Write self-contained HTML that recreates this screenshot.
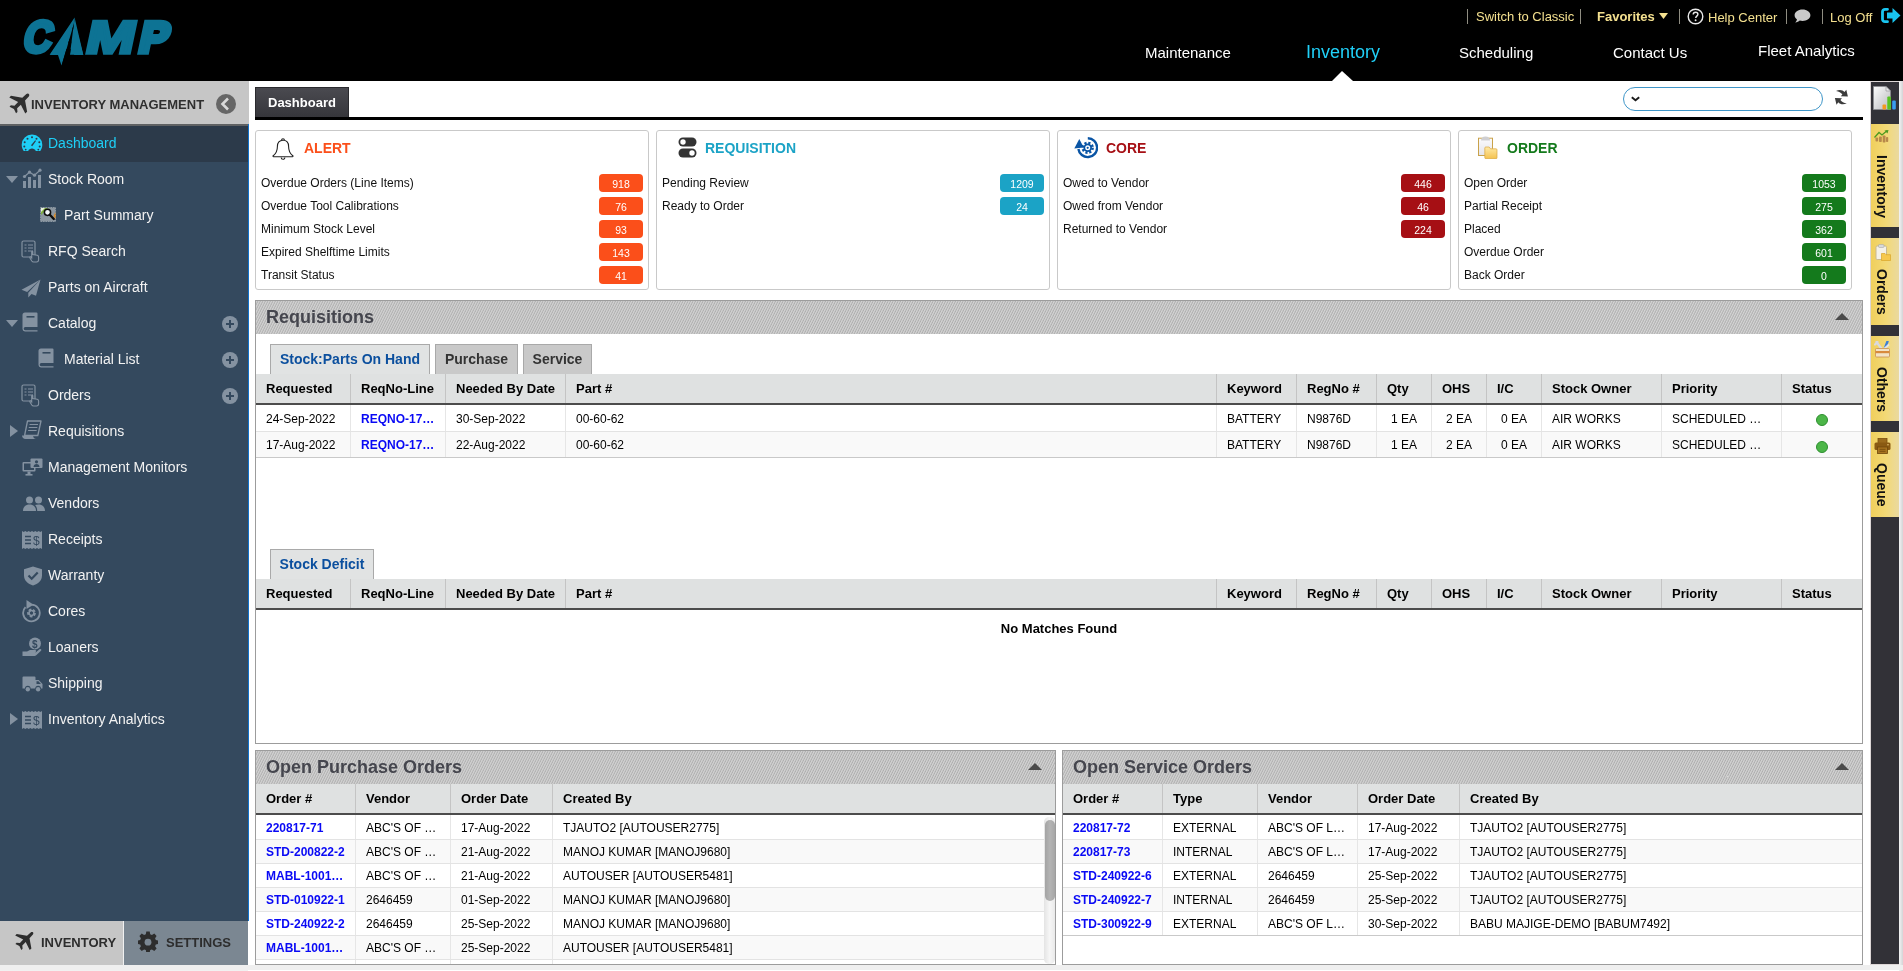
<!DOCTYPE html>
<html lang="en">
<head>
<meta charset="utf-8">
<title>CAMP - Inventory Management Dashboard</title>
<style>
*{box-sizing:border-box;}
html,body{margin:0;padding:0;}
body{-webkit-font-smoothing:antialiased;width:1903px;height:971px;overflow:hidden;background:#fff;font-family:"Liberation Sans",Arial,sans-serif;font-size:12px;color:#000;position:relative;}
a{text-decoration:none;color:inherit;}
.abs{position:absolute;}
/* ---------- top header ---------- */
#top{position:absolute;left:0;top:0;width:1903px;height:81px;background:#000;}
#logo{position:absolute;left:0;top:0;}
#toplinks{position:absolute;top:0;right:0;height:34px;width:520px;color:#f4e08f;font-size:13px;}
#toplinks span{position:absolute;top:9px;line-height:16px;white-space:nowrap;}
#toplinks i{position:absolute;top:9px;width:1px;height:15px;background:#8f8d82;}
#nav a{position:absolute;color:#fff;font-size:15px;line-height:20px;white-space:nowrap;}
#nav a.on{color:#20d0f8;font-size:18px;}
#navptr{position:absolute;left:1332px;top:71px;width:0;height:0;border-left:10px solid transparent;border-right:11px solid transparent;border-bottom:10px solid #fff;}
/* ---------- sidebar ---------- */
#side{position:absolute;left:0;top:81px;width:248px;height:890px;background:#34495e;}
#sidehead{position:absolute;left:0;top:0;width:249px;height:45px;background:#c6c6c6;border-bottom:2px solid #5f6163;}
#sidehead b{position:absolute;left:31px;top:16px;font-size:13px;line-height:16px;color:#2f2f2f;white-space:nowrap;}
#sideline{position:absolute;left:248px;top:124px;width:1px;height:797px;background:#1272cc;}
.mi{position:absolute;left:0;width:248px;height:36px;color:#f2f2f2;font-size:14px;line-height:34px;white-space:nowrap;}
.mi.on{background:#2c3a4a;color:#1ecff6;}
.mi span{position:absolute;left:48px;top:0;}
.mi.sub span{left:64px;}
.mi svg{position:absolute;}
.plus{position:absolute;left:222px;top:10px;width:16px;height:16px;border-radius:8px;background:#8492a1;}
.plus:before{content:"";position:absolute;left:4px;top:7px;width:8px;height:2px;background:#34495e;}
.plus:after{content:"";position:absolute;left:7px;top:4px;width:2px;height:8px;background:#34495e;}
.tri-d{position:absolute;left:6px;top:14px;width:0;height:0;border-left:6px solid transparent;border-right:6px solid transparent;border-top:7px solid #8492a1;}
.tri-r{position:absolute;left:10px;top:11px;width:0;height:0;border-top:6px solid transparent;border-bottom:6px solid transparent;border-left:8px solid #8492a1;}
#sidefoot{position:absolute;left:0;top:840px;width:248px;height:50px;background:#f1f1f1;}
#sidefoot div{position:absolute;top:0;height:44px;font-weight:bold;font-size:13px;line-height:43px;color:#2d2d2d;white-space:nowrap;}
/* ---------- main ---------- */
#dtab{position:absolute;left:255px;top:87px;width:94px;height:30px;background:linear-gradient(#4a4a50,#36363b);border:1px solid #2a2a2e;border-bottom:0;color:#fff;font-weight:bold;font-size:13px;line-height:29px;padding-left:12px;}
#dline{position:absolute;left:255px;top:117px;width:1608px;height:3px;background:#000;}
#search{position:absolute;left:1623px;top:87px;width:200px;height:24px;border:1px solid #3f96c8;border-radius:12px;background:#fff;}
.card{position:absolute;top:130px;width:394px;height:160px;border:1px solid #c9c9c9;border-radius:3px;background:#fff;}
.card h3{position:absolute;left:48px;top:9px;margin:0;font-size:14px;line-height:16px;font-weight:bold;}
.card .r{position:absolute;left:5px;height:23px;line-height:23px;font-size:12px;color:#111;white-space:nowrap;}
.card .b{position:absolute;left:343px;width:44px;height:18px;border-radius:4px;color:#fff;font-size:10.5px;line-height:21px;text-align:center;}
.sec{position:absolute;border:1px solid #9c9c9c;background:#fff;overflow:hidden;}
.sech{position:absolute;left:0;top:0;right:0;height:33px;background-color:#c4c4c4;color:#45464e;font-weight:bold;font-size:18px;line-height:32px;padding-left:10px;}
.sech svg{position:absolute;left:0;top:0;}
.sech span{position:relative;}
.sech:after{content:"";position:absolute;right:13px;top:12px;width:0;height:0;border-left:7px solid transparent;border-right:7px solid transparent;border-bottom:7px solid #4a4a4a;}
.stab{position:absolute;height:31px;border:1px solid #a9a9a9;border-bottom:0;background:#c9c9c9;color:#333;font-weight:bold;font-size:14px;line-height:29px;text-align:center;white-space:nowrap;}
.stab.on{background:#e1e3e3;color:#0b4f9e;}
.th{position:absolute;left:0;right:0;height:31px;background:#dfe1e1;border-bottom:2px solid #4c4c4c;font-weight:bold;font-size:13px;line-height:29px;color:#000;}
.th span,.tr span{position:absolute;top:0;bottom:0;padding-left:10px;border-left:1px solid #c4c4c4;white-space:nowrap;overflow:hidden;}
.th span:first-child,.tr span:first-child{border-left:0;}
.tr{position:absolute;left:0;right:0;font-size:12px;color:#000;border-bottom:1px solid #e3e3e3;}
.tr span{border-left-color:#e6e6e6;}
.tr.alt{background:#f9f9f9;}
.tr a{color:#0909f5;font-weight:bold;}
.dot{position:absolute;width:12px;height:12px;border-radius:6px;background:#4cb648;border:1px solid #2e8f30;}
/* ---------- right bar ---------- */
#rbar{position:absolute;left:1871px;top:82px;width:28px;height:882px;background:#323137;box-shadow:0 0 0 1px #ddd6d6;}
#redge{position:absolute;left:1899px;top:81px;width:4px;height:890px;background:linear-gradient(90deg,#f4f4f4,#d4d4d6);}
.rt{position:absolute;left:0;width:28px;background:linear-gradient(90deg,#f0cf5c,#f3d977 55%,#ead9a0);}
.rt b{position:absolute;left:11px;top:0;font-size:14px;line-height:16px;color:#111;white-space:nowrap;transform-origin:0 0;transform:rotate(90deg) translate(0,-8px);}
#bstrip{position:absolute;left:0;top:965px;width:1903px;height:5px;background:#efefef;}
#main{position:absolute;left:0;top:0;width:1903px;height:971px;}
#top,#side,#main,#rbar{will-change:transform;}
</style>
</head>
<body>
<div id="top">
  <svg id="logo" width="190" height="80" viewBox="0 0 190 80"><g font-family="Liberation Sans, sans-serif" font-weight="bold" fill="#0d7394" stroke="#0d7394" stroke-linejoin="miter"><text font-size="44.3" stroke-width="4.5" transform="translate(21.5,51.9) skewX(-12) scale(0.88,1)">C</text><text font-size="34" stroke-width="2" transform="translate(50.9,53.6) skewX(-12) scale(1.295,1)">A</text><text font-size="45.7" stroke-width="3.5" transform="translate(83.8,52.85) skewX(-12) scale(1.285,1)">M</text><text font-size="42.9" stroke-width="5.5" transform="translate(137.5,51.85) skewX(-12) scale(1.0,1)">P</text></g><polygon points="74.600,17.400 49.600,54.700 57.900,54.700 61.500,65.500 73.800,24" fill="#0d7394"/><polygon points="74.600,17.400 83.300,54.700 70,54.700 73.900,24" fill="#0d7394"/><polygon points="73.850,23.800 64.800,54.900 61.800,65 62.300,65.500 70,54.900 69.900,54.700" fill="#000"/></svg>
  <div id="toplinks">
    <i style="left:84px"></i>
    <span style="left:93px">Switch to Classic</span>
    <i style="left:197px"></i>
    <span style="left:214px;font-weight:bold">Favorites</span>
    <svg class="abs" style="left:276px;top:13px" width="9" height="6" viewBox="0 0 9 6"><path d="M0 0h9L4.500 6z" fill="#f4e08f"/></svg>
    <i style="left:296px"></i>
    <svg class="abs" style="left:304px;top:8px" width="17" height="17" viewBox="0 0 17 17"><circle cx="8.5" cy="8.5" r="7.3" fill="none" stroke="#e9e9e9" stroke-width="1.4"/><path d="M6.2 6.6c0-1.5 1-2.4 2.4-2.4 1.400 0 2.300.9 2.300 2.100 0 1.800-2.200 1.900-2.200 3.700" fill="none" stroke="#e9e9e9" stroke-width="1.4"/><circle cx="8.6" cy="12.3" r=".95" fill="#e9e9e9"/></svg>
    <span style="left:325px;top:10px">Help Center</span>
    <i style="left:403px"></i>
    <svg class="abs" style="left:411px;top:9px" width="17" height="15" viewBox="0 0 17 15"><path d="M8.500.5C4.100.5.600 3 .6 6.200c0 1.600.9 3 2.300 4-.1 1.200-.7 2.400-1.700 3.300 1.900-.1 3.500-.8 4.600-1.900.8.200 1.700.3 2.700.3 4.400 0 7.900-2.500 7.900-5.700S12.900.5 8.500.5z" fill="#c9c9c9"/></svg>
    <i style="left:439px"></i>
    <span style="left:447px;top:10px">Log Off</span>
    <svg class="abs" style="left:497px;top:7px" width="21" height="17" viewBox="0 0 21 17"><path d="M7.500 2.300H5a2.500 2.500 0 0 0-2.500 2.500v7.400A2.500 2.500 0 0 0 5 14.700h2.500" fill="none" stroke="#19c5f0" stroke-width="2.800" stroke-linecap="round"/><path d="M7 5.500h5.500V1L20.500 8.500 12.500 16v-4.500H7z" fill="#19c5f0"/></svg>
  </div>
  <div id="nav">
    <a style="left:1145px;top:43px">Maintenance</a>
    <a class="on" style="left:1306px;top:42px">Inventory</a>
    <a style="left:1459px;top:43px">Scheduling</a>
    <a style="left:1613px;top:43px">Contact Us</a>
    <a style="left:1758px;top:41px">Fleet Analytics</a>
  </div>
  <div id="navptr"></div>
</div>
<div id="side">
  <div id="sidehead">
    <svg class="abs" style="left:8px;top:12px" width="22" height="21" viewBox="0 0 20 19"><path d="M18.600.6c.9.400 1 1.500.3 2.500l-3.400 3.700 1.900 10.300-1.700 1.500-4-8-3.400 3.300.3 3.300-1.300 1.200-1.900-4-4-1.900 1.200-1.300 3.300.3 3.300-3.400-8-4L2.700 2.400 13 4.300 16.700.9c.6-.5 1.300-.6 1.900-.3z" fill="#2f2f2f"/></svg>
    <b>INVENTORY MANAGEMENT</b>
    <svg class="abs" style="left:216px;top:13px" width="20" height="20" viewBox="0 0 20 20"><circle cx="10" cy="10" r="10" fill="#666"/><path d="M12 4.500L6.500 10l5.500 5.500" fill="none" stroke="#d9d9d9" stroke-width="2.600"/></svg>
  </div>
  <div class="mi on" style="top:45px"><svg style="left:21px;top:8px" width="22" height="18" viewBox="0 0 22 18"><path d="M11 .6A10.200 10.200 0 0 0 .7 10.800c0 2.300.7 4.400 2 6.100h4.500c.7-1.400 2.100-2.300 3.800-2.300s3.100.9 3.800 2.300h4.500c1.300-1.700 2-3.800 2-6.100A10.200 10.200 0 0 0 11 .6z" fill="#1ecff6"/><g fill="#2c3a4a"><circle cx="11" cy="3.300" r="1"/><circle cx="6.500" cy="4.700" r="1"/><circle cx="15.500" cy="4.700" r="1"/><circle cx="3.700" cy="8.300" r="1"/><circle cx="18.300" cy="8.300" r="1"/><circle cx="3.300" cy="12.400" r="1"/><circle cx="18.700" cy="12.400" r="1"/><circle cx="4.700" cy="15.600" r=".9"/><circle cx="17.300" cy="15.600" r=".9"/><path d="M10 11.200l4.200-5 .8.700-3.800 5.300z"/></g></svg><span>Dashboard</span></div>
  <div class="mi " style="top:81px"><i class="tri-d"></i><svg style="left:22px;top:6px" width="21" height="21" viewBox="0 0 21 21"><g fill="#8492a1"><rect x="1" y="13" width="3" height="7"/><rect x="6" y="9" width="3" height="11"/><rect x="11" y="12" width="3" height="8"/><rect x="16" y="7" width="3" height="13"/><circle cx="2.500" cy="8.500" r="1.600"/><circle cx="7.500" cy="4.200" r="1.600"/><circle cx="12.500" cy="7.200" r="1.600"/><circle cx="18" cy="2.200" r="1.600"/></g><path d="M2.500 8.500l5-4.300 5 3L18 2.200" fill="none" stroke="#8492a1" stroke-width="1.200"/></svg><span>Stock Room</span></div>
  <div class="mi sub" style="top:117px"><svg style="left:40px;top:9px" width="17" height="16" viewBox="0 0 17 16"><rect x=".5" y=".5" width="15" height="14" fill="#8b96a0" stroke="#aab3bb" stroke-width=".6" stroke-dasharray="1.500 1"/><path d="M1 1h7L1 8z" fill="#7fae3f"/><path d="M1 1h4L1 5z" fill="#e8f0dc"/><path d="M15.500 5v7l-2-3z" fill="#e08a1e"/><circle cx="7.500" cy="5.300" r="3.100" fill="#f4f8fb" stroke="#0c0c0c" stroke-width="1.500"/><path d="M9.800 7.800l4 4.200" stroke="#0c0c0c" stroke-width="2.300" stroke-linecap="round"/></svg><span>Part Summary</span></div>
  <div class="mi " style="top:153px"><svg style="left:21px;top:6px" width="20" height="23" viewBox="0 0 20 23"><rect x="1" y="1" width="13" height="16" rx="1.500" fill="none" stroke="#8492a1" stroke-width="1.200"/><g stroke="#8492a1" stroke-width="1.100"><path d="M3.500 5h2M7 5h5M3.500 8h2M7 8h5M3.500 11h2M7 11h3"/></g><path d="M10.500 10.500c.9 0 1.300.5 1.300 1.300v2.700l4.400.8c.9.200 1.400.8 1.400 1.700v2.800c0 1.300-.8 2.200-2.100 2.200h-2.900c-.8 0-1.400-.4-1.800-1l-2-3.300c-.3-.6.500-1.200 1-.7l.9.900v-6.100c0-.8-.1-1.300-.2-1.300z" fill="#34495e" stroke="#8492a1" stroke-width="1.100"/></svg><span>RFQ Search</span></div>
  <div class="mi " style="top:189px"><svg style="left:21px;top:9px" width="20" height="19" viewBox="0 0 20 19"><path d="M19.500.5L.5 10.800l5.600 2.300zM19.500.5L7.300 13.800v4.700l3.200-3.600 4.500 1.900z" fill="#8492a1"/></svg><span>Parts on Aircraft</span></div>
  <div class="mi " style="top:225px"><i class="tri-d"></i><svg style="left:22px;top:6px" width="16" height="20" viewBox="0 0 16 20"><path d="M3 .5h11.500a1 1 0 0 1 1 1V15H3.300a1.600 1.600 0 0 0 0 3.200h12.200v1.300H3A2.600 2.600 0 0 1 .5 17V3A2.500 2.500 0 0 1 3 .5z" fill="#8492a1"/><rect x="4.500" y="4" width="8" height="1.600" fill="#34495e"/></svg><span>Catalog</span><i class="plus"></i></div>
  <div class="mi sub" style="top:261px"><svg style="left:38px;top:6px" width="16" height="20" viewBox="0 0 16 20"><path d="M3 .5h11.500a1 1 0 0 1 1 1V15H3.300a1.600 1.600 0 0 0 0 3.200h12.200v1.300H3A2.600 2.600 0 0 1 .5 17V3A2.500 2.500 0 0 1 3 .5z" fill="#8492a1"/><rect x="4.500" y="4" width="8" height="1.600" fill="#34495e"/></svg><span>Material List</span><i class="plus"></i></div>
  <div class="mi " style="top:297px"><svg style="left:21px;top:6px" width="20" height="23" viewBox="0 0 20 23"><rect x="1" y="1" width="13" height="16" rx="1.500" fill="none" stroke="#8492a1" stroke-width="1.200"/><g stroke="#8492a1" stroke-width="1.100"><path d="M3.500 5h2M7 5h5M3.500 8h2M7 8h5M3.500 11h2M7 11h3"/></g><path d="M10.500 10.500c.9 0 1.300.5 1.300 1.300v2.700l4.400.8c.9.200 1.400.8 1.400 1.700v2.800c0 1.300-.8 2.200-2.100 2.200h-2.900c-.8 0-1.400-.4-1.800-1l-2-3.300c-.3-.6.500-1.200 1-.7l.9.900v-6.100c0-.8-.1-1.300-.2-1.300z" fill="#34495e" stroke="#8492a1" stroke-width="1.100"/></svg><span>Orders</span><i class="plus"></i></div>
  <div class="mi " style="top:333px"><i class="tri-r"></i><svg style="left:21px;top:6px" width="21" height="22" viewBox="0 0 21 22"><path d="M6.500 1h13.500l-3.200 14.500H3.600z" fill="#34495e" stroke="#8492a1" stroke-width="1.300" stroke-linejoin="round"/><path d="M8.500 4.500h8.500M7.800 7.500h8.500M7.100 10.500h8.500" stroke="#8492a1" stroke-width="1.200"/><path d="M1 15.500h11c.2 2 1.300 3.400 3.300 3.600H4.400C2.500 18.900 1.200 17.500 1 15.500z" fill="#8492a1"/></svg><span>Requisitions</span></div>
  <div class="mi " style="top:369px"><svg style="left:22px;top:8px" width="21" height="19" viewBox="0 0 21 19"><rect x=".5" y="4" width="13" height="9.500" rx="1" fill="#8492a1"/><rect x="2" y="5.500" width="10" height="6.500" fill="#34495e"/><rect x="5.500" y="13.500" width="3" height="2.500" fill="#8492a1"/><rect x="3.500" y="16" width="7" height="1.600" fill="#8492a1"/><rect x="8.500" y=".5" width="12" height="9.500" rx="1" fill="#8492a1"/><circle cx="14.500" cy="3.800" r="1.600" fill="#34495e"/><path d="M11.500 9c0-2 1.300-3 3-3s3 1 3 3z" fill="#34495e"/></svg><span>Management Monitors</span></div>
  <div class="mi " style="top:405px"><svg style="left:23px;top:10px" width="22" height="16" viewBox="0 0 22 16"><g fill="#8492a1"><circle cx="6.500" cy="4" r="3.500"/><path d="M0 15c0-4 2.500-6.500 6.500-6.500S13 11 13 15z"/><circle cx="15.500" cy="4" r="3.500"/><path d="M14.200 15c0-2.600-.8-4.600-2.200-5.900 1-.4 2.200-.6 3.500-.6 4 0 6.500 2.500 6.500 6.500z"/></g></svg><span>Vendors</span></div>
  <div class="mi " style="top:441px"><svg style="left:22px;top:8px" width="20" height="20" viewBox="0 0 20 20"><path d="M0 1l1.700 1 1.600-1L5 2l1.700-1 1.600 1L10 1l1.700 1 1.600-1L15 2l1.700-1 1.600 1L20 1v18l-1.700-1-1.600 1-1.700-1-1.600 1-1.700-1-1.700 1-1.600-1-1.700 1L5 18l-1.700 1-1.600-1L0 19z" fill="#8492a1"/><g stroke="#34495e" stroke-width="1.500"><path d="M3 6.500h6M3 10h6M3 13.500h6"/></g><text x="11" y="14.500" font-family="Liberation Sans, sans-serif" font-size="12" fill="#34495e">$</text></svg><span>Receipts</span></div>
  <div class="mi " style="top:477px"><svg style="left:23px;top:8px" width="20" height="20" viewBox="0 0 20 20"><path d="M10 .5L1 3.200v6.300c0 5 3.800 8.500 9 10 5.200-1.500 9-5 9-10V3.200z" fill="#8492a1"/><path d="M5.500 9.500l3.200 3.200 6-6.200" fill="none" stroke="#34495e" stroke-width="2.200"/></svg><span>Warranty</span></div>
  <div class="mi " style="top:513px"><svg style="left:21px;top:5px" width="21" height="24" viewBox="0 0 21 24"><path d="M4.500 8.200A8.300 8.300 0 1 0 10.500 5.700" fill="none" stroke="#8492a1" stroke-width="1.800"/><path d="M5.500 1l7 4.700-7 4.300z" fill="#8492a1"/><circle cx="10.500" cy="14" r="3.200" fill="none" stroke="#8492a1" stroke-width="2.400" stroke-dasharray="2.500 1.500"/><circle cx="10.500" cy="14" r="2.400" fill="none" stroke="#8492a1" stroke-width="1.500"/></svg><span>Cores</span></div>
  <div class="mi " style="top:549px"><svg style="left:22px;top:7px" width="21" height="21" viewBox="0 0 21 21"><circle cx="13" cy="6.500" r="6" fill="#8492a1"/><text x="10" y="10.500" font-family="Liberation Sans, sans-serif" font-size="10" font-weight="bold" fill="#34495e">$</text><path d="M.5 14.500h4.500l3-1.500h5c1.500 0 1.500 2 0 2.200h-3 4l3.500-3c1.200-.9 2.500.5 1.500 1.600L14.500 18c-.8.800-1.500 1-2.500 1H.5z" fill="#8492a1"/></svg><span>Loaners</span></div>
  <div class="mi " style="top:585px"><svg style="left:22px;top:10px" width="21" height="17" viewBox="0 0 21 17"><path d="M1.500.5h11a1 1 0 0 1 1 1V4h3.200l3.800 4v4.500h-1.600a2.800 2.800 0 0 0-5.600 0H8.600a2.800 2.800 0 0 0-5.600 0H.5v-11a1 1 0 0 1 1-1z" fill="#8492a1"/><path d="M14.500 5.300h2l2.400 2.700h-4.400z" fill="#34495e"/><circle cx="5.800" cy="13.200" r="2.200" fill="#8492a1"/><circle cx="16.100" cy="13.200" r="2.200" fill="#8492a1"/></svg><span>Shipping</span></div>
  <div class="mi " style="top:621px"><i class="tri-r"></i><svg style="left:22px;top:8px" width="20" height="20" viewBox="0 0 20 20"><path d="M0 1l1.700 1 1.600-1L5 2l1.700-1 1.600 1L10 1l1.700 1 1.600-1L15 2l1.700-1 1.600 1L20 1v18l-1.700-1-1.600 1-1.700-1-1.600 1-1.700-1-1.700 1-1.600-1-1.700 1L5 18l-1.700 1-1.600-1L0 19z" fill="#8492a1"/><g stroke="#34495e" stroke-width="1.500"><path d="M3 6.500h6M3 10h6M3 13.500h6"/></g><text x="11" y="14.500" font-family="Liberation Sans, sans-serif" font-size="12" fill="#34495e">$</text></svg><span>Inventory Analytics</span></div>
  <div id="sidefoot">
    <div style="left:0;width:123px;background:#c6c6c6"><svg class="abs" style="left:14px;top:10px" width="20" height="20" viewBox="0 0 20 19"><path d="M18.600.6c.9.400 1 1.500.3 2.500l-3.400 3.700 1.900 10.300-1.700 1.500-4-8-3.400 3.300.3 3.300-1.300 1.200-1.900-4-4-1.900 1.200-1.300 3.300.3 3.300-3.400-8-4L2.700 2.400 13 4.300 16.700.9c.6-.5 1.300-.6 1.900-.3z" fill="#2d2d2d"/></svg><span class="abs" style="left:41px">INVENTORY</span></div>
    <div style="left:124px;width:124px;background:#7b8792"><svg class="abs" style="left:14px;top:10px" width="20" height="21" viewBox="0 0 20 21"><path d="M8.300.5h3.400l.5 2.700 1.700.8 2.400-1.500 2.300 2.400-1.500 2.300.7 1.800 2.700.6v3.300l-2.700.6-.7 1.700 1.500 2.400-2.300 2.300-2.400-1.500-1.700.7-.5 2.700H8.300l-.5-2.700-1.700-.7-2.400 1.500-2.300-2.300 1.500-2.400-.7-1.700L-.5 12.900V9.600l2.700-.6.700-1.800-1.500-2.300 2.300-2.400L6.100 4l1.700-.8z" fill="#2d2d2d"/><circle cx="10" cy="11.200" r="3.400" fill="#7b8792"/></svg><span class="abs" style="left:42px">SETTINGS</span></div>
  </div>
</div>
<div id="sideline"></div>
<div id="main">
<div id="dtab">Dashboard</div><div id="dline"></div>
<div id="search"><svg class="abs" style="left:7px;top:8px" width="9" height="6" viewBox="0 0 9 6"><path d="M.8 1.200l3.700 3L8.200 1.200" fill="none" stroke="#1a1a1a" stroke-width="1.900"/></svg></div>
<svg class="abs" style="left:1834px;top:89px" width="16" height="17" viewBox="0 0 16 17"><path d="M2 2.100C5 .4 8.700.800 10.500 3.100L12.300.700 13.900 7.400 6.800 7.200 8.400 5.500C7 3.700 5 2.600 2 2.100z" fill="#3c3c3c"/><path d="M2 2.100C5 .4 8.700.800 10.500 3.100L12.300.700 13.900 7.400 6.800 7.200 8.400 5.500C7 3.700 5 2.600 2 2.100z" transform="rotate(180 7.400 8.200)" fill="#3c3c3c"/></svg>
<div class="card" style="left:255px"><svg class="abs" style="left:16px;top:7px" width="22" height="24" viewBox="0 0 22 24"><path d="M11 2.200c-3.600 0-5.600 2.600-5.600 6.200 0 5.300-2 7.600-4.200 9.300-.5.400-.2 1.100.4 1.100h18.800c.6 0 .9-.7.400-1.100-2.200-1.700-4.200-4-4.200-9.300 0-3.600-2-6.200-5.600-6.200z" fill="#fff" stroke="#222" stroke-width="1.100"/><path d="M9.600 2.100a1.400 1.400 0 0 1 2.800 0" fill="none" stroke="#222" stroke-width="1.100"/><path d="M9.200 19.500a1.800 1.800 0 0 0 3.600 0" fill="none" stroke="#222" stroke-width="1.100"/></svg><h3 style="color:#fb4f1a">ALERT</h3><div class="r" style="top:41px">Overdue Orders (Line Items)</div><div class="b" style="top:43px;background:#fb4f1a">918</div><div class="r" style="top:64px">Overdue Tool Calibrations</div><div class="b" style="top:66px;background:#fb4f1a">76</div><div class="r" style="top:87px">Minimum Stock Level</div><div class="b" style="top:89px;background:#fb4f1a">93</div><div class="r" style="top:110px">Expired Shelftime Limits</div><div class="b" style="top:112px;background:#fb4f1a">143</div><div class="r" style="top:133px">Transit Status</div><div class="b" style="top:135px;background:#fb4f1a">41</div></div>
<div class="card" style="left:656px"><svg class="abs" style="left:21px;top:6px" width="19" height="21" viewBox="0 0 19 21"><rect x=".5" y=".5" width="18" height="9" rx="4.500" fill="#333"/><circle cx="5" cy="5" r="2.700" fill="#fff"/><rect x=".5" y="11.500" width="18" height="9" rx="4.500" fill="#333"/><circle cx="14" cy="16" r="2.700" fill="#fff"/></svg><h3 style="color:#1ba3c6">REQUISITION</h3><div class="r" style="top:41px">Pending Review</div><div class="b" style="top:43px;background:#1ba3c6">1209</div><div class="r" style="top:64px">Ready to Order</div><div class="b" style="top:66px;background:#1ba3c6">24</div></div>
<div class="card" style="left:1057px"><svg class="abs" style="left:16px;top:5px" width="24" height="24" viewBox="0 0 24 24"><path d="M13.800 2.300A9.400 9.400 0 1 1 4.400 13" fill="none" stroke="#0a55a5" stroke-width="2.400"/><path d="M5.300 3L.3 12.500l9.400-1z" fill="#0a55a5"/><circle cx="13.700" cy="11.800" r="4.900" fill="none" stroke="#0a55a5" stroke-width="2.600" stroke-dasharray="2.100 1.748"/><circle cx="13.700" cy="11.800" r="4.300" fill="#0a55a5"/><circle cx="13.700" cy="11.800" r="2.500" fill="#fff"/><circle cx="13.700" cy="11.800" r="1.100" fill="#0a55a5"/></svg><h3 style="color:#a60f14">CORE</h3><div class="r" style="top:41px">Owed to Vendor</div><div class="b" style="top:43px;background:#a60f14">446</div><div class="r" style="top:64px">Owed from Vendor</div><div class="b" style="top:66px;background:#a60f14">46</div><div class="r" style="top:87px">Returned to Vendor</div><div class="b" style="top:89px;background:#a60f14">224</div></div>
<div class="card" style="left:1458px"><svg class="abs" style="left:18px;top:4px" width="22" height="24" viewBox="0 0 22 24"><defs><linearGradient id="fg" x1="0" y1="0" x2="0" y2="1"><stop offset="0" stop-color="#ffeaa6"/><stop offset="1" stop-color="#f4c250"/></linearGradient><linearGradient id="cg" x1="0" y1="0" x2="0" y2="1"><stop offset="0" stop-color="#fbfbfd"/><stop offset="1" stop-color="#e4e4ea"/></linearGradient></defs><rect x="1.500" y="3.200" width="14" height="17.300" fill="url(#cg)" stroke="#c9a24a" stroke-width="1"/><path d="M4 5.500c0-2 1.500-4 4.500-4s4.500 2 4.500 4z" fill="#cfcfd2"/><path d="M7.800 15.600c0-.6.300-1 .9-1h3.400l1.400 1.800h5.600c.6 0 .9.400.9 1v7.900c0 .6-.3 1-.9 1H8.700c-.6 0-.9-.4-.9-1z" transform="translate(0,-2.600)" fill="url(#fg)" stroke="#d9a640" stroke-width=".7"/></svg><h3 style="color:#147a1c">ORDER</h3><div class="r" style="top:41px">Open Order</div><div class="b" style="top:43px;background:#147a1c">1053</div><div class="r" style="top:64px">Partial Receipt</div><div class="b" style="top:66px;background:#147a1c">275</div><div class="r" style="top:87px">Placed</div><div class="b" style="top:89px;background:#147a1c">362</div><div class="r" style="top:110px">Overdue Order</div><div class="b" style="top:112px;background:#147a1c">601</div><div class="r" style="top:133px">Back Order</div><div class="b" style="top:135px;background:#147a1c">0</div></div>
<div class="sec" style="left:255px;top:300px;width:1608px;height:444px">
<div class="sech"><svg width="1606" height="33"><defs><pattern id="hatch" width="2.236" height="8" patternUnits="userSpaceOnUse" patternTransform="rotate(26.600)"><rect width="2.236" height="8" fill="#afafaf"/><rect width="1.150" height="8" fill="#d6d6d6"/></pattern></defs><rect width="1606" height="33" fill="url(#hatch)"/></svg><span>Requisitions</span></div>
<div class="stab on" style="left:14px;top:43px;width:160px">Stock:Parts On Hand</div><div class="stab" style="left:179px;top:43px;width:83px">Purchase</div><div class="stab" style="left:267px;top:43px;width:69px">Service</div>
<div class="th" style="top:73px"><span style="left:0px;width:94px">Requested</span><span style="left:94px;width:95px">ReqNo-Line</span><span style="left:189px;width:120px">Needed By Date</span><span style="left:309px;width:651px">Part #</span><span style="left:960px;width:80px">Keyword</span><span style="left:1040px;width:80px">RegNo #</span><span style="left:1120px;width:55px">Qty</span><span style="left:1175px;width:55px">OHS</span><span style="left:1230px;width:55px">I/C</span><span style="left:1285px;width:120px">Stock Owner</span><span style="left:1405px;width:120px">Priority</span><span style="left:1525px;width:81px">Status</span></div>
<div class="tr" style="top:104px;height:27px;line-height:29px"><span style="left:0px;width:94px">24-Sep-2022</span><span style="left:94px;width:95px"><a>REQNO-17&hellip;</a></span><span style="left:189px;width:120px">30-Sep-2022</span><span style="left:309px;width:651px">00-60-62</span><span style="left:960px;width:80px">BATTERY</span><span style="left:1040px;width:80px">N9876D</span><span style="left:1120px;width:55px;padding-left:0;text-align:center">1 EA</span><span style="left:1175px;width:55px;padding-left:0;text-align:center">2 EA</span><span style="left:1230px;width:55px;padding-left:0;text-align:center">0 EA</span><span style="left:1285px;width:120px">AIR WORKS</span><span style="left:1405px;width:120px">SCHEDULED &hellip;</span><span style="left:1525px;width:81px"><i class="dot" style="left:34px;top:9px"></i></span></div>
<div class="tr alt" style="top:131px;height:26px;line-height:27px;border-bottom:1px solid #c9c9c9"><span style="left:0px;width:94px">17-Aug-2022</span><span style="left:94px;width:95px"><a>REQNO-17&hellip;</a></span><span style="left:189px;width:120px">22-Aug-2022</span><span style="left:309px;width:651px">00-60-62</span><span style="left:960px;width:80px">BATTERY</span><span style="left:1040px;width:80px">N9876D</span><span style="left:1120px;width:55px;padding-left:0;text-align:center">1 EA</span><span style="left:1175px;width:55px;padding-left:0;text-align:center">2 EA</span><span style="left:1230px;width:55px;padding-left:0;text-align:center">0 EA</span><span style="left:1285px;width:120px">AIR WORKS</span><span style="left:1405px;width:120px">SCHEDULED &hellip;</span><span style="left:1525px;width:81px"><i class="dot" style="left:34px;top:9px"></i></span></div>
<div class="stab on" style="left:14px;top:248px;width:104px">Stock Deficit</div>
<div class="th" style="top:278px"><span style="left:0px;width:94px">Requested</span><span style="left:94px;width:95px">ReqNo-Line</span><span style="left:189px;width:120px">Needed By Date</span><span style="left:309px;width:651px">Part #</span><span style="left:960px;width:80px">Keyword</span><span style="left:1040px;width:80px">RegNo #</span><span style="left:1120px;width:55px">Qty</span><span style="left:1175px;width:55px">OHS</span><span style="left:1230px;width:55px">I/C</span><span style="left:1285px;width:120px">Stock Owner</span><span style="left:1405px;width:120px">Priority</span><span style="left:1525px;width:81px">Status</span></div>
<div class="abs" style="left:0;right:0;top:319px;text-align:center;font-weight:bold;font-size:13px;line-height:18px">No Matches Found</div>
</div>
<div class="sec" style="left:255px;top:750px;width:801px;height:215px">
<div class="sech"><svg width="1606" height="33"><rect width="1606" height="33" fill="url(#hatch)"/></svg><span>Open Purchase Orders</span></div>
<div class="th" style="top:33px"><span style="left:0px;width:99px">Order #</span><span style="left:99px;width:95px">Vendor</span><span style="left:194px;width:102px">Order Date</span><span style="left:296px;width:503px">Created By</span></div>
<div class="tr" style="top:64px;height:25px;line-height:27px;right:11px"><span style="left:0px;width:99px"><a>220817-71</a></span><span style="left:99px;width:95px">ABC'S OF &hellip;</span><span style="left:194px;width:102px">17-Aug-2022</span><span style="left:296px;width:492px">TJAUTO2 [AUTOUSER2775]</span></div>
<div class="tr alt" style="top:89px;height:24px;line-height:25px;right:11px"><span style="left:0px;width:99px"><a>STD-200822-2</a></span><span style="left:99px;width:95px">ABC'S OF &hellip;</span><span style="left:194px;width:102px">21-Aug-2022</span><span style="left:296px;width:492px">MANOJ KUMAR [MANOJ9680]</span></div>
<div class="tr" style="top:113px;height:24px;line-height:25px;right:11px"><span style="left:0px;width:99px"><a>MABL-1001&hellip;</a></span><span style="left:99px;width:95px">ABC'S OF &hellip;</span><span style="left:194px;width:102px">21-Aug-2022</span><span style="left:296px;width:492px">AUTOUSER [AUTOUSER5481]</span></div>
<div class="tr alt" style="top:137px;height:24px;line-height:25px;right:11px"><span style="left:0px;width:99px"><a>STD-010922-1</a></span><span style="left:99px;width:95px">2646459</span><span style="left:194px;width:102px">01-Sep-2022</span><span style="left:296px;width:492px">MANOJ KUMAR [MANOJ9680]</span></div>
<div class="tr" style="top:161px;height:24px;line-height:25px;right:11px"><span style="left:0px;width:99px"><a>STD-240922-2</a></span><span style="left:99px;width:95px">2646459</span><span style="left:194px;width:102px">25-Sep-2022</span><span style="left:296px;width:492px">MANOJ KUMAR [MANOJ9680]</span></div>
<div class="tr alt" style="top:185px;height:24px;line-height:25px;right:11px"><span style="left:0px;width:99px"><a>MABL-1001&hellip;</a></span><span style="left:99px;width:95px">ABC'S OF &hellip;</span><span style="left:194px;width:102px">25-Sep-2022</span><span style="left:296px;width:492px">AUTOUSER [AUTOUSER5481]</span></div>
<div class="tr" style="top:209px;height:24px;line-height:25px;right:11px"><span style="left:0px;width:99px"><a>&nbsp;</a></span><span style="left:99px;width:95px"></span><span style="left:194px;width:102px"></span><span style="left:296px;width:492px"></span></div>
<div class="abs" style="right:0;top:66px;width:11px;bottom:0;border-radius:5px;background:linear-gradient(90deg,#e4e4e4,#f6f6f6 50%,#e9e9e9)"><div class="abs" style="left:1px;top:3px;width:10px;height:81px;border-radius:5px;background:linear-gradient(90deg,#a4a4a4,#b4b4b4 50%,#a6a6a6)"></div></div>
</div>
<div class="sec" style="left:1062px;top:750px;width:801px;height:215px">
<div class="sech"><svg width="1606" height="33"><rect width="1606" height="33" fill="url(#hatch)"/></svg><span>Open Service Orders</span></div>
<div class="th" style="top:33px"><span style="left:0px;width:99px">Order #</span><span style="left:99px;width:95px">Type</span><span style="left:194px;width:100px">Vendor</span><span style="left:294px;width:102px">Order Date</span><span style="left:396px;width:403px">Created By</span></div>
<div class="tr" style="top:64px;height:25px;line-height:27px"><span style="left:0px;width:99px"><a>220817-72</a></span><span style="left:99px;width:95px">EXTERNAL</span><span style="left:194px;width:100px">ABC'S OF L&hellip;</span><span style="left:294px;width:102px">17-Aug-2022</span><span style="left:396px;width:403px">TJAUTO2 [AUTOUSER2775]</span></div>
<div class="tr alt" style="top:89px;height:24px;line-height:25px"><span style="left:0px;width:99px"><a>220817-73</a></span><span style="left:99px;width:95px">INTERNAL</span><span style="left:194px;width:100px">ABC'S OF L&hellip;</span><span style="left:294px;width:102px">17-Aug-2022</span><span style="left:396px;width:403px">TJAUTO2 [AUTOUSER2775]</span></div>
<div class="tr" style="top:113px;height:24px;line-height:25px"><span style="left:0px;width:99px"><a>STD-240922-6</a></span><span style="left:99px;width:95px">EXTERNAL</span><span style="left:194px;width:100px">2646459</span><span style="left:294px;width:102px">25-Sep-2022</span><span style="left:396px;width:403px">TJAUTO2 [AUTOUSER2775]</span></div>
<div class="tr alt" style="top:137px;height:24px;line-height:25px"><span style="left:0px;width:99px"><a>STD-240922-7</a></span><span style="left:99px;width:95px">INTERNAL</span><span style="left:194px;width:100px">2646459</span><span style="left:294px;width:102px">25-Sep-2022</span><span style="left:396px;width:403px">TJAUTO2 [AUTOUSER2775]</span></div>
<div class="tr" style="top:161px;height:24px;line-height:25px;border-bottom:1px solid #c9c9c9"><span style="left:0px;width:99px"><a>STD-300922-9</a></span><span style="left:99px;width:95px">EXTERNAL</span><span style="left:194px;width:100px">ABC'S OF L&hellip;</span><span style="left:294px;width:102px">30-Sep-2022</span><span style="left:396px;width:403px">BABU MAJIGE-DEMO [BABUM7492]</span></div>
</div>
</div>
<div id="rbar">
  <svg class="abs" style="left:2px;top:4px" width="24" height="24" viewBox="0 0 24 24"><defs><linearGradient id="pg" x1="0" y1="0" x2="1" y2="1"><stop offset="0" stop-color="#fdfdfd"/><stop offset="1" stop-color="#b9b9bd"/></linearGradient></defs><path d="M.5.500h12.500l4.500 4.500v18.500H.5z" fill="url(#pg)" stroke="#8d8d92" stroke-width=".8"/><path d="M13 .5v4.500h4.500z" fill="#e9e9ec" stroke="#8d8d92" stroke-width=".6"/><rect x="9.500" y="18.500" width="3.600" height="5" rx="1" fill="#f39a1f"/><rect x="14.300" y="10.500" width="3.600" height="13" rx="1" fill="#58c322"/><rect x="19.200" y="14.500" width="3.600" height="9" rx="1" fill="#3a9cf0"/></svg>
  <div class="rt" style="top:42px;height:103px"><svg class="abs" style="left:3px;top:6px" width="15" height="13" viewBox="0 0 15 13"><g fill="#b8894a"><rect x="1.500" y="7.500" width="2.600" height="4" rx=".8"/><rect x="5" y="6.500" width="2.800" height="5.500" rx=".8"/><rect x="8.700" y="5.500" width="2.800" height="7" rx=".8"/><rect x="12" y="7" width="2.200" height="5" rx=".8"/></g><path d="M.5 7.500L5 2.500l3 2.500L13 .800" fill="none" stroke="#4c9a1f" stroke-width="1.300"/><path d="M14.500 0l-4 .600 3 2.800z" fill="#4c9a1f"/></svg><b style="top:31px">Inventory</b></div>
  <div class="rt" style="top:156px;height:87px"><svg class="abs" style="left:4px;top:6px" width="16" height="17" viewBox="0 0 16 17"><rect x="1" y="2" width="10.500" height="13.500" rx="1.200" fill="#f4f1e8" stroke="#c9b98f"/><rect x="3.500" y=".5" width="5.500" height="3" rx="1" fill="#d9d9d9" stroke="#aaa" stroke-width=".6"/><path d="M6.500 9.500h3.500l1 1.200h4.500v5.800h-9z" fill="#f6c84e" stroke="#d9a52a" stroke-width=".7"/></svg><b style="top:31px">Orders</b></div>
  <div class="rt" style="top:254px;height:85px"><svg class="abs" style="left:3px;top:5px" width="17" height="17" viewBox="0 0 17 17"><path d="M2.500 1l4.500 6M1 3.500l2.500-2.500" stroke="#d9d9df" stroke-width="2.200" stroke-linecap="round"/><path d="M13.500.5l-2.500 6.500" stroke="#3d7fd6" stroke-width="2.400" stroke-linecap="round"/><path d="M14.500 4l-4 3.500" stroke="#e3e3e8" stroke-width="1.800" stroke-linecap="round"/><rect x="1.500" y="7.500" width="14" height="8.500" rx="1" fill="#f3e3c5" stroke="#c98f4e" stroke-width=".8"/><rect x="1.500" y="10" width="14" height="2.200" fill="#d88a3c"/></svg><b style="top:31px">Others</b></div>
  <div class="rt" style="top:350px;height:85px"><svg class="abs" style="left:3px;top:6px" width="17" height="16" viewBox="0 0 17 16"><rect x="4" y=".5" width="9" height="5" fill="#9a6a1c" stroke="#7a4f0f" stroke-width=".8"/><rect x=".5" y="4.500" width="16" height="7.500" rx="1.500" fill="#8a5a12"/><rect x="3.500" y="9" width="10" height="6.500" fill="#a87420" stroke="#6f470b" stroke-width=".8"/><path d="M5.500 11.300h6M5.500 13.300h6" stroke="#6f470b" stroke-width=".8"/><circle cx="14" cy="6.800" r=".8" fill="#e9c878"/></svg><b style="top:31px">Queue</b></div>
</div>
<div id="redge"></div>
<div id="bstrip"></div>
</body>
</html>
